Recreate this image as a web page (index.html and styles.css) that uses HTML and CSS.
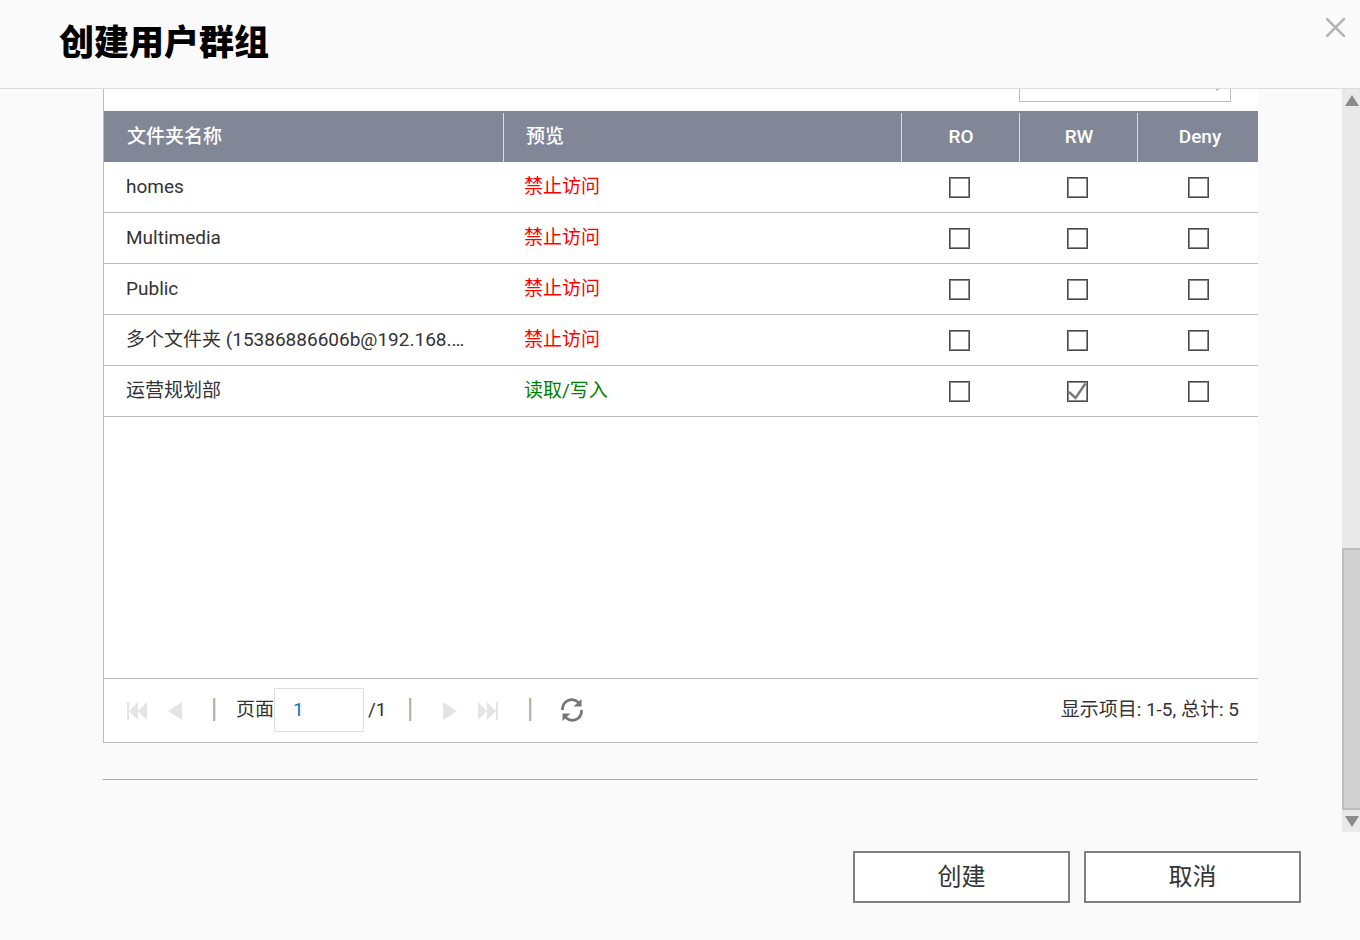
FILE: index.html
```html
<!DOCTYPE html>
<html lang="zh-CN">
<head>
<meta charset="utf-8">
<title>创建用户群组</title>
<link rel="stylesheet" href="styles.css">
</head>
<body>
<div class="dialog">
  <header class="dialog-header">
    <h1 class="dialog-title">创建用户群组</h1>
    <button class="close" type="button" aria-label="关闭">
      <svg width="19" height="19" viewBox="0 0 19 19"><path d="M0 0 19 19M19 0 0 19" stroke="#b4b4b4" stroke-width="2.600" fill="none"/></svg>
    </button>
  </header>
  <div class="viewport">
    <main class="content">
      <section class="panel">
        <div class="toolbar">
          <div class="search">
            <input class="search-input" type="text" aria-label="搜索">
            <svg class="search-icon" width="20" height="20" viewBox="0 0 20 20"><path d="M11 13l4 6" stroke="#b0b0b0" stroke-width="3"/><circle cx="8" cy="8" r="6" stroke="#b0b0b0" stroke-width="2" fill="none"/></svg>
          </div>
        </div>
        <div class="grid-body">
          <table class="grid">
            <colgroup><col class="col-name"><col><col class="col-check"><col class="col-check"><col class="col-deny"></colgroup>
            <thead>
              <tr><th>文件夹名称</th><th>预览</th><th class="check">RO</th><th class="check">RW</th><th class="check">Deny</th></tr>
            </thead>
            <tbody>
              <tr><td>homes</td><td class="denied">禁止访问</td><td class="check"><input type="checkbox" aria-label="homes RO"></td><td class="check"><input type="checkbox" aria-label="homes RW"></td><td class="check"><input type="checkbox" aria-label="homes Deny"></td></tr>
              <tr><td>Multimedia</td><td class="denied">禁止访问</td><td class="check"><input type="checkbox" aria-label="Multimedia RO"></td><td class="check"><input type="checkbox" aria-label="Multimedia RW"></td><td class="check"><input type="checkbox" aria-label="Multimedia Deny"></td></tr>
              <tr><td>Public</td><td class="denied">禁止访问</td><td class="check"><input type="checkbox" aria-label="Public RO"></td><td class="check"><input type="checkbox" aria-label="Public RW"></td><td class="check"><input type="checkbox" aria-label="Public Deny"></td></tr>
              <tr><td>多个文件夹 (15386886606b@192.168.…</td><td class="denied">禁止访问</td><td class="check"><input type="checkbox" aria-label="多个文件夹 RO"></td><td class="check"><input type="checkbox" aria-label="多个文件夹 RW"></td><td class="check"><input type="checkbox" aria-label="多个文件夹 Deny"></td></tr>
              <tr><td>运营规划部</td><td class="allowed">读取/写入</td><td class="check"><input type="checkbox" aria-label="运营规划部 RO"></td><td class="check"><span class="ticked"><input type="checkbox" checked aria-label="运营规划部 RW"><svg class="tick" width="21" height="21" viewBox="0 0 21 21"><path d="M2 11L8.500 17L18.500 2.500" fill="none" stroke="#777" stroke-width="2.400"/></svg></span></td><td class="check"><input type="checkbox" aria-label="运营规划部 Deny"></td></tr>
            </tbody>
          </table>
        </div>
        <div class="pager">
          <div class="pager-group">
            <button type="button" class="nav" aria-label="首页"><svg width="20" height="18" viewBox="0 0 20 18"><path d="M0 0h2v18H0zM11 0v18L2 9zM20 0v18l-9-9z" fill="#e4e4e4"/></svg></button>
            <button type="button" class="nav" aria-label="上一页"><svg width="14" height="18" viewBox="0 0 14 18"><path d="M14 0v18L0 9z" fill="#e4e4e4"/></svg></button>
          </div>
          <span class="sep"></span>
          <div class="page-field">
            <label for="page">页面</label>
            <input id="page" class="page-input" type="text" value="1">
            <span class="page-total">/1</span>
          </div>
          <span class="sep"></span>
          <div class="pager-group">
            <button type="button" class="nav" aria-label="下一页"><svg width="14" height="18" viewBox="0 0 14 18"><path d="M0 0v18l14-9z" fill="#e4e4e4"/></svg></button>
            <button type="button" class="nav" aria-label="末页"><svg width="20" height="18" viewBox="0 0 20 18"><path d="M18 0h2v18h-2zM0 0v18l9-9zM9 0v18l9-9z" fill="#e4e4e4"/></svg></button>
          </div>
          <span class="sep"></span>
          <button type="button" class="nav refresh" aria-label="刷新"><svg width="22" height="24" viewBox="0 0 22 24"><g fill="none" stroke="#777" stroke-width="2.800"><path d="M1.400 12C1.400 2 11-1 17.500 4.500"/><path d="M20.600 12C20.600 22 11 25 4.500 19.500"/></g><path d="M20.500 1v7.500h-8zM1.500 23v-7.500h8z" fill="#777"/></svg></button>
          <span class="summary">显示项目: 1-5, 总计: 5</span>
        </div>
      </section>
      <hr class="rule">
    </main>
    <div class="scrollbar" aria-hidden="true">
      <div class="arrow"><svg width="14" height="11" viewBox="0 0 14 11"><path d="M7 0l7 11H0z" fill="#8a8a8a"/></svg></div>
      <div class="track"></div>
      <div class="thumb"></div>
      <div class="arrow"><svg width="14" height="11" viewBox="0 0 14 11"><path d="M7 11L0 0h14z" fill="#8a8a8a"/></svg></div>
    </div>
  </div>
  <footer class="dialog-footer">
    <button class="action" type="button">创建</button>
    <button class="action" type="button">取消</button>
  </footer>
</div>
</body>
</html>
```
FILE: styles.css
```css
* { box-sizing: border-box; }
body {
  margin: 0;
  background: #fafafa;
  color: #333;
  font: 19px/26px Roboto, "Noto Sans CJK SC", sans-serif;
}
button, input { font: inherit; color: inherit; margin: 0; }
svg { display: block; }

.dialog { display: flex; flex-direction: column; height: 100vh; }
.dialog-header {
  display: flex;
  justify-content: space-between;
  align-items: flex-start;
  padding: 18px 15px 18px 59px;
  border-bottom: 1px solid #ddd;
}
.dialog-title { margin: 0; font-size: 35px; line-height: 52px; font-weight: 900; color: #000; }
.close { padding: 0; border: 0; background: none; cursor: pointer; }

.viewport { display: flex; flex: 1; min-height: 0; }
.content { flex: 1; min-width: 0; overflow: hidden; padding: 0 84px 0 103px; }
.panel { background: #fff; border-left: 1px solid #bcbcbc; border-bottom: 1px solid #bcbcbc; }

.toolbar {
  display: flex;
  justify-content: flex-end;
  align-items: flex-end;
  height: 22px;
  padding: 0 27px 9px 0;
  overflow: hidden;
}
.search { position: relative; }
.search-input { display: block; width: 212px; height: 44px; padding: 0 36px 0 12px; border: 1px solid #bcbcbc; background: #fff; }
.search-icon { position: absolute; right: 8px; top: 13px; }

.grid-body { min-height: 567px; }
.grid { width: 100%; table-layout: fixed; border-collapse: separate; border-spacing: 0; }
.col-name { width: 400px; }
.col-check { width: 118px; }
.col-deny { width: 120px; }
.grid th, .grid td { height: 51px; text-align: left; white-space: nowrap; overflow: hidden; }
.grid th {
  padding: 0 22px 0 23px;
  color: #fff;
  font-weight: 500;
  background: linear-gradient(#dcdde3, #dcdde3) right bottom / 1px 49px no-repeat #818797;
}
.grid th + th { padding-left: 22px; }
.grid th:last-child { background: #818797; }
.grid td { padding: 0 22px; border-bottom: 1px solid #bcbcbc; }
.grid td + td { padding-left: 20px; }
.grid th.check { padding: 0; text-align: center; }
.grid td.check { padding: 0 4px 0 0; text-align: center; }
.grid th.check:last-child { padding-left: 4px; }
.grid td.check:last-child { padding: 0; }
.grid .denied { color: #f00; }
.grid .allowed { color: #008000; }
.grid input {
  appearance: none;
  display: block;
  width: 21px;
  height: 21px;
  margin: 0 auto;
  border: 1px solid #4a4a4a;
  background: #fff;
  box-shadow: inset 0 0 0 1px #8a8a8a;
}
.ticked { display: block; position: relative; width: 21px; margin: 0 auto; }
.tick { position: absolute; left: 0; top: 0; pointer-events: none; }

.pager { display: flex; align-items: center; height: 64px; padding: 0 19px 2px 23px; border-top: 1px solid #bcbcbc; }
.pager-group { display: flex; gap: 21px; padding-top: 2px; }
.nav { padding: 0; border: 0; background: none; cursor: pointer; }
.sep { width: 3px; height: 23px; margin: 0 20px 0 31px; border-left: 2px solid #b9b7a7; border-right: 1px solid #e6e4da; }
.page-field { display: flex; align-items: center; margin-right: -9px; }
.page-input { width: 90px; height: 44px; padding: 0 18px; border: 1px solid #e0e0e0; background: #fff; color: #0077c8; }
.page-total { margin-left: 4px; }
.page-field + .sep { margin-right: 31px; }
.refresh { margin-left: 9px; }
.summary { margin-left: auto; }

.rule { height: 1px; margin: 36px 0 0; border: 0; background: #a8a8a8; }

.scrollbar { display: flex; flex-direction: column; width: 18px; background: #e9e9e9; }
.arrow { display: flex; align-items: center; justify-content: flex-end; height: 22px; padding-right: 1px; }
.track { flex: 436 0 2px; }
.thumb { flex: 259 0 0px; border: solid #bcbcbc; border-width: 2px 0 2px 2px; background: #d0d0d0; }

.dialog-footer { display: flex; justify-content: flex-end; gap: 14px; padding: 19px 59px 37px; }
.action { width: 217px; height: 52px; padding: 0; border: 2px solid #808080; background: #fff; font-size: 24px; line-height: 36px; cursor: pointer; }
```
